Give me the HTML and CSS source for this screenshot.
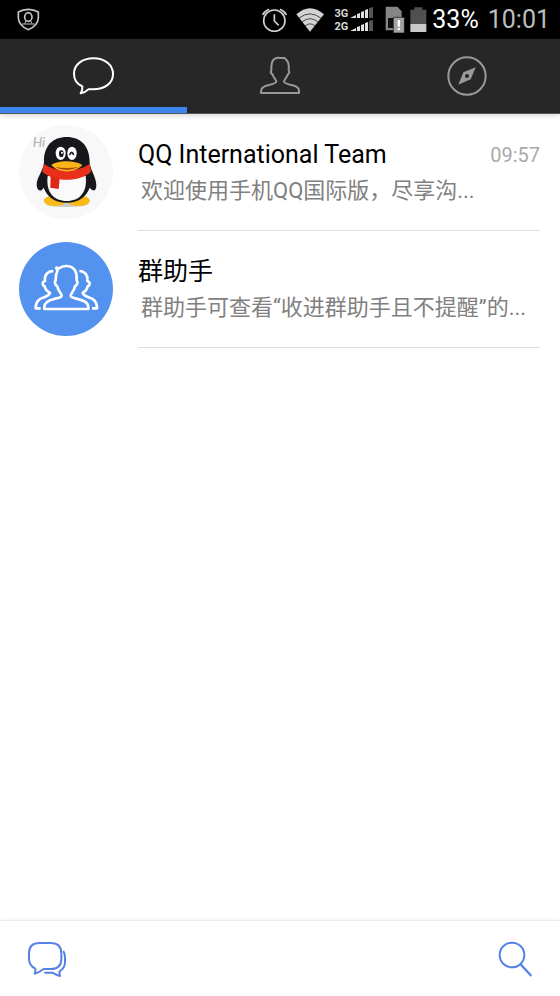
FILE: index.html
```html
<!DOCTYPE html>
<html lang="zh-CN">
<head>
<meta charset="utf-8">
<meta name="viewport" content="width=device-width, initial-scale=1">
<title>QQ International</title>
<link rel="stylesheet" href="styles.css">
</head>
<body>
<div class="status-bar">
  <svg class="shield" viewBox="51 24 69 69" width="23" height="23" aria-hidden="true" fill="none" stroke="#c4c4c4" stroke-width="5">
    <path d="M85 28C74 28 65 30 55 36V54C56 70 68 82 85 89C102 82 114 70 115 54V36C105 30 96 28 85 28Z"/>
    <ellipse cx="85" cy="51" rx="11" ry="13"/>
    <path d="M66 72H104M78 63L74 71M92 63L96 71" stroke-width="3"/>
  </svg>
  <div class="status-icons">
    <svg class="alarm" viewBox="24 24 75 72" width="25" height="24" aria-hidden="true" fill="none" stroke="#d0d0d0" stroke-width="5">
      <circle cx="61" cy="62" r="32"/>
      <path d="M61 43V63L74 76"/>
      <path d="M26 45Q31 34 45 28M97 45Q92 34 78 28"/>
    </svg>
    <svg class="wifi" viewBox="126 24 84 72" width="28" height="24" aria-hidden="true">
      <path d="M127 43Q168 7 210 43L168 95Z" fill="#d2d2d2"/>
      <path d="M134 55Q168 28 202 55M144 66Q168 46 192 66M153 78Q168 65 183 78" fill="none" stroke="#000" stroke-width="2"/>
    </svg>
    <div class="networks">
      <div class="network"><span>3G</span>
        <svg viewBox="0 0 24 12" width="24" height="12" aria-hidden="true"><path d="M0 11L6 8V11ZM7 7L10 6V11H7ZM11 5L14 4V11H11ZM15 3L18 2V11H15Z" fill="#e2e2e2"/><path d="M19 1L23 0V11H19Z" fill="#555"/></svg>
      </div>
      <div class="network"><span>2G</span>
        <svg viewBox="0 0 24 12" width="24" height="12" aria-hidden="true"><path d="M0 11L6 8V11ZM7 7L10 6V11H7ZM11 5L14 4V11H11ZM15 3L18 2V11H15Z" fill="#e2e2e2"/><path d="M19 1L23 0V11H19Z" fill="#555"/></svg>
      </div>
    </div>
    <svg class="sim" viewBox="391 18 60 81" width="20" height="27" aria-hidden="true">
      <path d="M393 20H428L441 34V91H393Z" fill="#858585"/>
      <path d="M400 54H416V84H400Z" fill="#111"/>
      <path d="M416 52H449V99H416Z" fill="#a3a3a3" stroke="#111" stroke-width="2"/>
      <path d="M429 60H436V80H429ZM429 84H436V90H429Z" fill="#fff"/>
    </svg>
    <svg class="battery" viewBox="17 18 51 75" width="17" height="25" aria-hidden="true">
      <path d="M18 26H30V19H54V26H66V69H18Z" fill="#505050"/>
      <path d="M18 69H66V93H18Z" fill="#c9c9c9"/>
    </svg>
    <span class="percent">33%</span>
    <time class="clock">10:01</time>
  </div>
</div>

<nav class="tabs">
  <button class="tab tab-active" aria-label="Messages">
    <svg viewBox="216 168 129 120" width="43" height="40" fill="none" stroke="#fff" stroke-width="6" stroke-linejoin="round">
      <path d="M247 259C231 252 222 238 222 221C222 194 246 175 281 175C315 175 339 195 339 222C339 250 314 268 279 268H265C258 275 251 279 242 280C247 273 248 267 247 259Z"/>
    </svg>
  </button>
  <button class="tab" aria-label="Contacts">
    <svg viewBox="57 48 126 120" width="42" height="40" fill="none" stroke="#999" stroke-width="6" stroke-linejoin="round">
      <path d="M63 159V153C64 143 70 139 84 136C101 132 108 130 109 125C109 119 101 114 98 104C93 101 91 96 94 91C94 75 94 61 106 55C114 51 123 55 134 54L138 59C147 64 147 76 146 91C150 96 147 101 143 104C141 113 132 118 132 125C133 130 144 133 157 136C171 139 177 144 177 153V159Z"/>
    </svg>
  </button>
  <button class="tab" aria-label="Discover">
    <svg viewBox="620 49 120 120" width="40" height="40" fill="none">
      <circle cx="680" cy="109" r="56" stroke="#999" stroke-width="6"/>
      <path d="M706 83L691 119L654 135L669 98Z" fill="#999"/>
      <circle cx="680" cy="109" r="6" fill="#272727"/>
    </svg>
  </button>
</nav>

<main class="chats">
  <a class="chat" href="#team">
    <svg class="avatar" viewBox="28 15 282 282" aria-hidden="true">
      <circle cx="169" cy="156" r="141" fill="#f8f8f8"/>
      <text class="greeting" x="69" y="81">Hi</text>
      <ellipse cx="171" cy="253" rx="62" ry="8" fill="#ccc"/>
      <ellipse cx="136" cy="242" rx="34" ry="16" fill="#f9b916"/>
      <ellipse cx="207" cy="242" rx="34" ry="16" fill="#f9b916"/>
      <path d="M103 126C102 77 130 51 171 51C212 51 240 77 240 126C239 145 260 170 260 196C260 212 252 217 240 203C230 231 206 248 171 248C136 248 112 231 102 203C92 219 81 211 81 193C82 170 104 147 103 126Z" fill="#17181b"/>
      <path d="M114 168C108 218 133 243 171 243C210 243 234 217 228 168Z" fill="#fafafa"/>
      <path d="M102 131C139 158 204 158 241 131L244 155C211 187 134 188 98 155Z" fill="#e8301b"/>
      <path d="M123 168L150 176L147 207L122 203Z" fill="#df2717"/>
      <ellipse cx="153" cy="100" rx="15" ry="20" fill="#fff"/>
      <ellipse cx="187" cy="100" rx="14" ry="20" fill="#fff"/>
      <ellipse cx="155" cy="101" rx="7" ry="10" fill="#17181b"/>
      <circle cx="157" cy="98" r="3" fill="#fff"/>
      <path d="M180 105Q186 89 192 105" fill="none" stroke="#17181b" stroke-width="5"/>
      <path d="M125 135C145 120 195 120 218 135C197 160 147 161 125 135Z" fill="#f9b418"/>
      <path d="M136 141Q171 147 207 141Q171 159 136 141Z" fill="#a34810"/>
    </svg>
    <div class="chat-body">
      <div class="chat-head"><h2 class="chat-name">QQ International Team</h2><time class="chat-time">09:57</time></div>
      <p class="chat-text">欢迎使用手机QQ国际版，尽享沟...</p>
    </div>
  </a>
  <a class="chat" href="#groups">
    <svg class="avatar" viewBox="27 20 282 282" aria-hidden="true" fill="none" stroke="#fff" stroke-width="8" stroke-linejoin="round">
      <circle cx="168" cy="161" r="141" fill="#5392ee" stroke="none"/>
      <path d="M103 221V215C103 200 115 195 132 191C147 187 155 186 155 181C155 174 144 168 142 153C135 149 133 141 137 135C137 122 138 115 142 107L139 97L148 99C158 90 177 90 187 97C200 105 201 118 200 135C205 142 201 149 195 153C192 169 181 174 182 182C183 187 192 188 207 192C224 196 235 202 235 215V221Z"/>
      <path d="M130 107C110 108 103 121 105 137C95 140 97 151 104 153C106 164 113 169 120 173C119 181 104 184 92 190C81 196 77 204 77 219H92M208 107C227 108 234 121 232 137C242 140 240 151 233 153C231 164 225 169 218 173C219 181 234 184 246 190C257 196 261 204 261 219H246"/>
    </svg>
    <div class="chat-body">
      <div class="chat-head"><h2 class="chat-name">群助手</h2></div>
      <p class="chat-text">群助手可查看“收进群助手且不提醒”的...</p>
    </div>
  </a>
</main>

<footer class="toolbar">
  <button class="tool" aria-label="New chat">
    <svg viewBox="81 93 120 111" width="40" height="37" fill="none" stroke="#5682e6" stroke-width="6" stroke-linejoin="round">
      <path d="M106 176C92 169 87 160 87 147V130C87 109 98 99 119 99H151C173 99 184 110 184 130V146C184 167 173 177 151 177H131C122 183 115 189 104 191C107 186 107 182 106 176Z"/>
      <path d="M190 123C195 130 195 136 195 145V157C195 172 189 178 178 185L180 198C170 197 164 192 158 188H133"/>
    </svg>
  </button>
  <button class="tool" aria-label="Search">
    <svg viewBox="81 93 108 111" width="36" height="37" fill="none" stroke="#5682e6">
      <circle cx="126" cy="135" r="37" stroke-width="6"/>
      <path d="M151 162L184 198" stroke-width="7"/>
    </svg>
  </button>
</footer>
</body>
</html>
```
FILE: styles.css
```css
* {
  box-sizing: border-box;
}

body {
  display: flex;
  flex-direction: column;
  min-height: 100vh;
  margin: 0;
  background: #fff;
  font-family: Roboto, "Noto Sans CJK SC", sans-serif;
}

svg {
  display: block;
  flex: none;
}

button {
  padding: 0;
  border: 0;
  background: none;
  cursor: pointer;
}

.status-bar {
  display: flex;
  align-items: center;
  justify-content: space-between;
  height: 39px;
  padding: 0 10px 0 17px;
  background: #000;
}

.status-icons {
  display: flex;
  align-items: center;
}

.wifi {
  margin-left: 9px;
}

.networks {
  margin-left: 11px;
}

.network {
  display: flex;
  align-items: center;
  gap: 2px;
  height: 13px;
  color: #d8d8d8;
  font-size: 11px;
  font-weight: 700;
  line-height: 13px;
}

.sim {
  margin-left: 11px;
}

.battery {
  margin-left: 5px;
}

.percent,
.clock {
  font-size: 25px;
  line-height: 40px;
}

.percent {
  margin-left: 5px;
  color: #fff;
}

.clock {
  margin-left: 9px;
  color: #bebebe;
}

.tabs {
  display: grid;
  grid-template-columns: repeat(3, 1fr);
  height: 75px;
  background: #272727;
  border-bottom: 1px solid #555;
  box-shadow: 0 1px 6px rgba(0, 0, 0, 0.2);
}

.tab {
  display: flex;
  align-items: center;
  justify-content: center;
  border-top: 6px solid transparent;
  border-bottom: 6px solid transparent;
}

.tab-active {
  border-bottom-color: #3e86ed;
}

.chats {
  flex: 1;
}

.chat {
  display: flex;
  gap: 25px;
  padding: 0 20px 0 19px;
  color: inherit;
  text-decoration: none;
}

.avatar {
  width: 94px;
  height: 94px;
  margin-top: 11px;
}

.greeting {
  fill: #aeb0b2;
  font-family: Lato, sans-serif;
  font-size: 40px;
  font-style: italic;
}

.chat-body {
  flex: 1;
  min-width: 0;
  height: 117px;
  padding-top: 25px;
  border-bottom: 1px solid #dedfe3;
}

.chat-head {
  display: flex;
  align-items: center;
  justify-content: space-between;
  height: 32px;
}

.chat-name {
  margin: 0;
  color: #000;
  font-size: 25px;
  font-weight: 400;
  line-height: 32px;
}

.chat-time {
  color: #aaa;
  font-size: 20px;
  line-height: 32px;
}

.chat-text {
  margin: 4px 0 0;
  padding-left: 3px;
  overflow: hidden;
  color: #808080;
  font-size: 22px;
  font-weight: 400;
  line-height: 32px;
  text-overflow: ellipsis;
  white-space: nowrap;
}

.toolbar {
  display: flex;
  align-items: center;
  justify-content: space-between;
  height: 76px;
  padding: 2px 27px 0;
  border-top: 1px solid #eee;
  box-shadow: 0 -1px 3px rgba(0, 0, 0, 0.05);
}
```
